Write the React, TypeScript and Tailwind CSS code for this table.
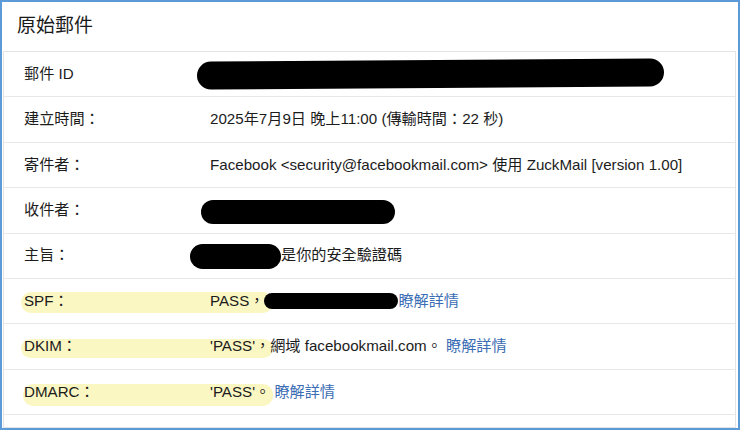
import type { ReactNode } from 'react';

/* Original message header view — "原始郵件" */

const FONT = { fontFamily: '"Liberation Sans", "Noto Sans CJK TC", sans-serif' };

function Redact({ className }: { className: string }) {
    return <span className={`inline-block rounded-full bg-black ${className}`} />;
}

function Link({ children }: { children: ReactNode }) {
    return <span className="text-[#3a6db4]">{children}</span>;
}

type Row = {
    label: string;
    value: ReactNode;
    mark?: string;
};

const ROWS: Row[] = [
    {
        label: '郵件 ID',
        value: <Redact className="-ml-[13px] h-[28px] w-[467px] -rotate-[0.4deg]" />,
    },
    { label: '建立時間：', value: '2025年7月9日 晚上11:00 (傳輸時間：22 秒)' },
    { label: '寄件者：', value: 'Facebook <security@facebookmail.com> 使用 ZuckMail [version 1.00]' },
    {
        label: '收件者：',
        value: <Redact className="-ml-[9px] mt-[3px] h-[24px] w-[194px]" />,
    },
    {
        label: '主旨：',
        value: (
            <>
                <Redact className="-ml-[20px] mt-[2px] h-[25px] w-[91px]" />
                <span>是你的安全驗證碼</span>
            </>
        ),
    },
    {
        label: 'SPF：',
        mark: 'top-[13px] h-[21px] left-[17px] w-[252px]',
        value: (
            <>
                <span>PASS，</span>
                <Redact className="h-[16px] w-[134px]" />
                <Link>瞭解詳情</Link>
            </>
        ),
    },
    {
        label: 'DKIM：',
        mark: 'top-[15px] h-[19px] left-[17px] w-[252px]',
        value: (
            <>
                <span>'PASS'，網域 facebookmail.com。&nbsp;</span>
                <Link>瞭解詳情</Link>
            </>
        ),
    },
    {
        label: 'DMARC：',
        mark: 'top-[14px] h-[22px] left-[19px] w-[250px]',
        value: (
            <>
                <span>'PASS'。&nbsp;</span>
                <Link>瞭解詳情</Link>
            </>
        ),
    },
];

export default function App() {
    return (
        <div className="h-[430px] w-[740px] overflow-hidden bg-white">
            <div
                className="flex h-full flex-col border-2 border-[#5c9ad8] text-[#1c1c1c]"
                style={FONT}
            >
                {/* Title */}
                <div className="flex h-[49px] items-center pl-[15px] text-[19px] text-[#1a1a1a]">
                    原始郵件
                </div>

                {/* Detail table */}
                <div className="ml-[1px] mr-[2px] flex-1 border border-[#e4e4e4]">
                    {ROWS.map((row) => (
                        <div
                            key={row.label}
                            className="relative flex h-[45.4px] items-center border-b border-[#e8e8e8] text-[15.15px]"
                        >
                            {row.mark && (
                                <span
                                    className={`absolute rounded-[10px] bg-[#fbf7c3] ${row.mark}`}
                                />
                            )}
                            <div className="relative w-[206px] shrink-0 pl-[20px]">{row.label}</div>
                            <div className="relative flex items-center whitespace-nowrap">{row.value}</div>
                        </div>
                    ))}
                </div>
            </div>
        </div>
    );
}
